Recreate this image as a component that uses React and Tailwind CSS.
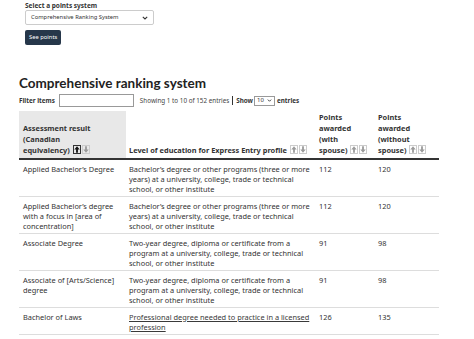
import { useState } from "react";

const rows = [
  {
    result: "Applied Bachelor’s Degree",
    level:
      "Bachelor’s degree or other programs (three or more years) at a university, college, trade or technical school, or other institute",
    withSpouse: 112,
    withoutSpouse: 120,
  },
  {
    result: "Applied Bachelor’s degree with a focus in [area of concentration]",
    level:
      "Bachelor’s degree or other programs (three or more years) at a university, college, trade or technical school, or other institute",
    withSpouse: 112,
    withoutSpouse: 120,
  },
  {
    result: "Associate Degree",
    level:
      "Two-year degree, diploma or certificate from a program at a university, college, trade or technical school, or other institute",
    withSpouse: 91,
    withoutSpouse: 98,
  },
  {
    result: "Associate of [Arts/Science] degree",
    level:
      "Two-year degree, diploma or certificate from a program at a university, college, trade or technical school, or other institute",
    withSpouse: 91,
    withoutSpouse: 98,
  },
  {
    result: "Bachelor of Laws",
    level: "Professional degree needed to practice in a licensed profession",
    link: true,
    withSpouse: 126,
    withoutSpouse: 135,
  },
];

const headers = [
  { text: "Assessment result (Canadian", last: "equivalency)", active: true },
  { text: "Level of education for Express Entry", last: "profile" },
  { text: "Points awarded (with", last: "spouse)" },
  { text: "Points awarded (without", last: "spouse)" },
];

const Arrow = ({ down, color }) => (
  <svg width="6" height="7" viewBox="0 0 6 7">
    <path
      d={
        down
          ? "M3 6.8 L0.3 3.6 L2.1 3.6 L2.1 0.2 L3.9 0.2 L3.9 3.6 L5.7 3.6 Z"
          : "M3 0.2 L0.3 3.4 L2.1 3.4 L2.1 6.8 L3.9 6.8 L3.9 3.4 L5.7 3.4 Z"
      }
      fill={color}
    />
  </svg>
);

// Small sort buttons next to each header label
const SortButtons = ({ active }) => (
  <span className="inline-flex gap-[1px] align-middle ml-[3px] -mt-[2px]">
    <span
      className={`inline-flex items-center justify-center w-[8px] h-[9px] border ${
        active ? "border-[#333]" : "border-[#ccc]"
      }`}
    >
      <Arrow color={active ? "#111" : "#9a9a9a"} />
    </span>
    <span className="inline-flex items-center justify-center w-[8px] h-[9px] border border-[#ccc]">
      <Arrow down color="#9a9a9a" />
    </span>
  </span>
);

const App = () => {
  const [filter, setFilter] = useState("");

  return (
    <div
      className="w-[474px] h-[339px] overflow-hidden bg-white text-[#333]"
      style={{ fontFamily: '"Noto Sans", sans-serif' }}
    >
      {/* Points system selector */}
      <div className="pl-[25px] pt-[1px]">
        <div className="text-[6.5px] font-bold leading-[9px]">
          Select a points system
        </div>
        <div className="w-[129px] h-[15px] border border-[#ccc] rounded-[2px] flex items-center justify-between px-[5px]">
          <span className="text-[5.8px]">Comprehensive Ranking System</span>
          <svg width="6" height="4" viewBox="0 0 6 4">
            <path d="M0.8 0.8 L3 3 L5.2 0.8" fill="none" stroke="#333" strokeWidth="1.1" />
          </svg>
        </div>
        <button className="mt-[5px] h-[15px] px-[4px] bg-[#26374a] text-white text-[5.8px] rounded-[2px] leading-none block">
          See points
        </button>
      </div>

      <div className="px-[19px]">
        <h2
          className="mt-[29px] text-[13.5px] font-bold leading-[18px] text-[#222]"
          style={{ fontFamily: "Lato, sans-serif" }}
        >
          Comprehensive ranking system
        </h2>

        {/* Filter / info row */}
        <div className="mt-[2px] flex items-center h-[13px] text-[6.3px]">
          <span className="font-bold">Filter items</span>
          <input
            value={filter}
            onChange={(e) => setFilter(e.target.value)}
            className="ml-[4px] w-[75px] h-[13px] border border-[#999] outline-none"
          />
          <span className="ml-[6px] text-[#444]">
            Showing 1 to 10 of 152 entries
          </span>
          <span className="mx-[3px] w-[1px] h-[9px] bg-[#333]" />
          <span className="font-bold">Show</span>
          <span className="ml-[1px] w-[21px] h-[10px] border border-[#999] flex items-center justify-between px-[2px] text-[6px]">
            10
            <svg width="5" height="3" viewBox="0 0 6 4">
              <path d="M0.8 0.8 L3 3 L5.2 0.8" fill="none" stroke="#333" strokeWidth="1.2" />
            </svg>
          </span>
          <span className="ml-[2px] font-bold">entries</span>
        </div>

        {/* Table */}
        <table className="mt-[4px] w-[420px] border-collapse table-fixed text-[7.4px]">
          <colgroup>
            <col className="w-[107px]" />
            <col className="w-[189px]" />
            <col className="w-[59px]" />
            <col className="w-[65px]" />
          </colgroup>
          <thead>
            <tr className="border-b-2 border-[#333] font-bold text-left align-bottom">
              {headers.map((h, i) => (
                <th
                  key={i}
                  className={`h-[48px] pb-[2px] leading-[11px] ${
                    i === 1 ? "px-[3px]" : "px-[4px]"
                  } ${h.active ? "bg-[#e8e8e8]" : ""}`}
                >
                  {h.text}{" "}
                  <span className="whitespace-nowrap">
                    {h.last}
                    <SortButtons active={h.active} />
                  </span>
                </th>
              ))}
            </tr>
          </thead>
          <tbody>
            {rows.map((row, i) => (
              <tr key={i} className="border-b border-[#ddd] align-top">
                <td className="px-[4px] pt-[4px] pb-[2px] leading-[10px]">{row.result}</td>
                <td className="px-[3px] pt-[4px] pb-[2px] leading-[10px]">
                  {row.link ? (
                    <span className="underline text-[#3a3a3a]">{row.level}</span>
                  ) : (
                    row.level
                  )}
                </td>
                <td className="px-[4px] pt-[4px] pb-[2px] leading-[10px]">{row.withSpouse}</td>
                <td className="px-[4px] pt-[4px] pb-[2px] leading-[10px]">{row.withoutSpouse}</td>
              </tr>
            ))}
          </tbody>
        </table>
      </div>
    </div>
  );
};

export default App;
